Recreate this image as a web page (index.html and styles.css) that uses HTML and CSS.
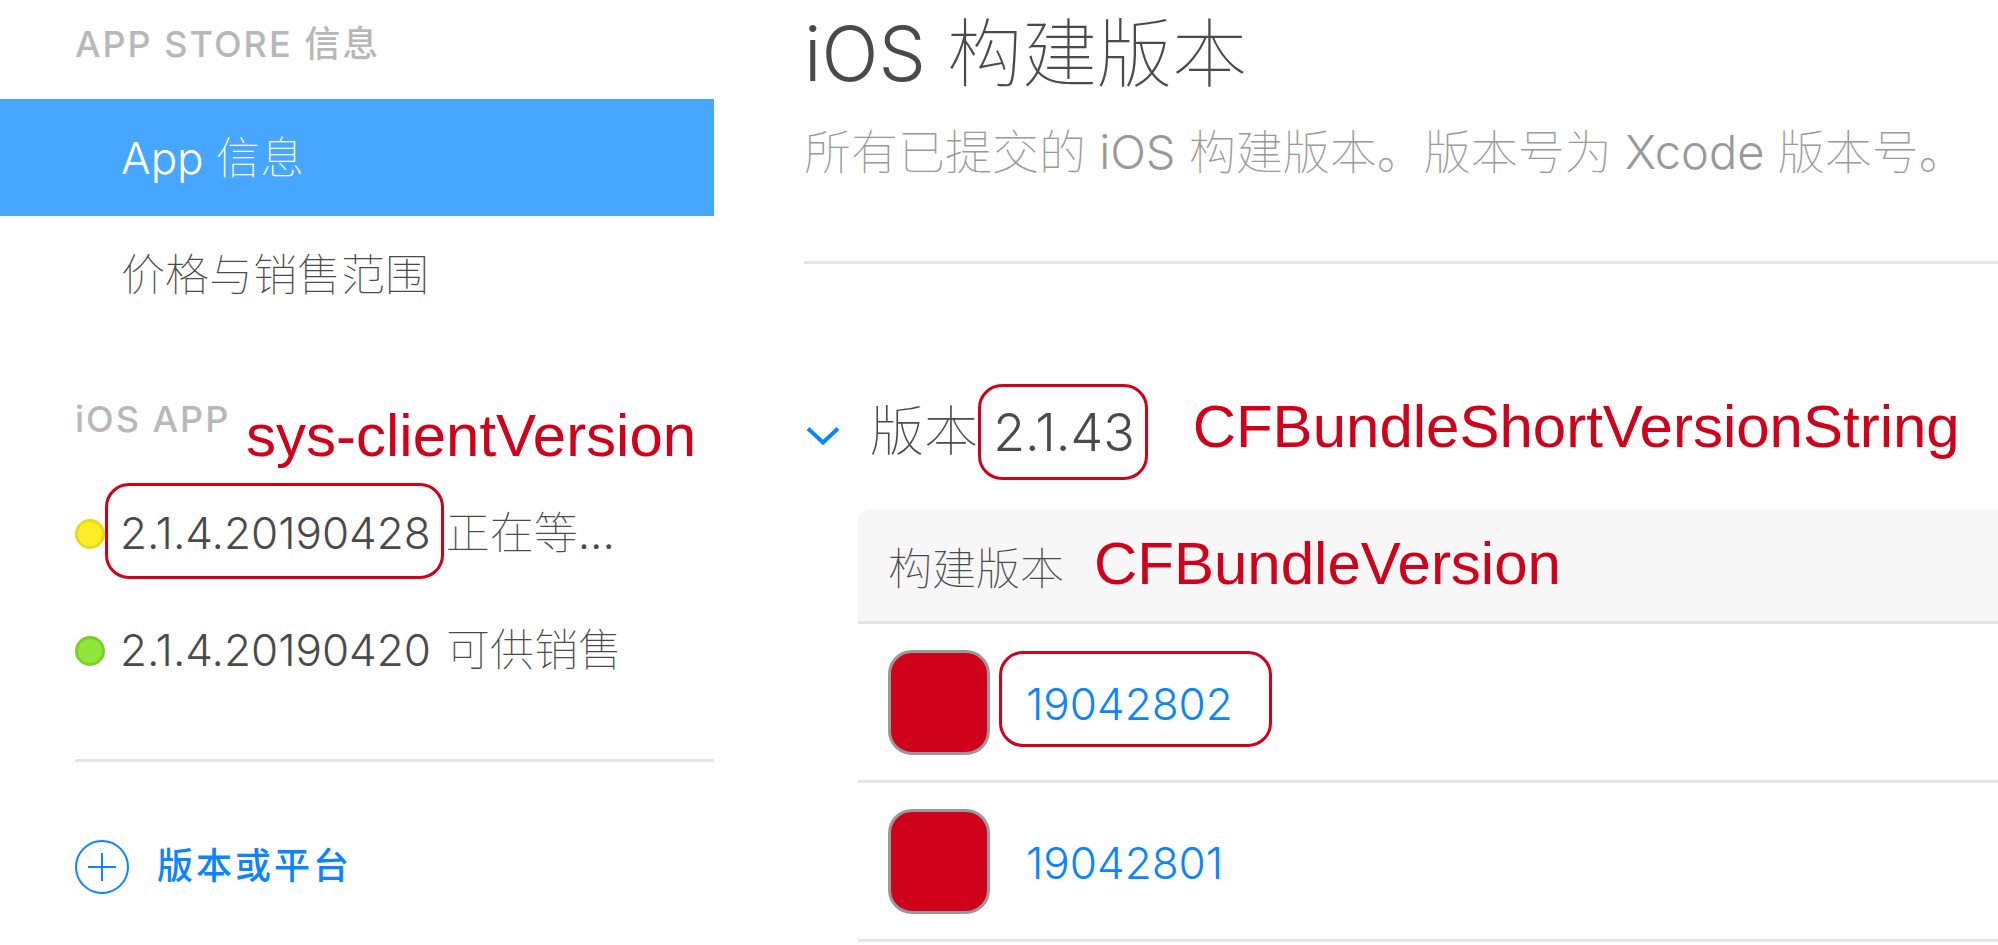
FILE: index.html
```html
<!DOCTYPE html>
<html lang="zh-CN">
<head>
<meta charset="utf-8">
<title>iOS 构建版本</title>
<link rel="stylesheet" href="styles.css">
</head>
<body>
<div class="page">
  <nav class="sidebar">
    <h2 class="group-title">APP STORE 信息</h2>
    <ul class="menu">
      <li><a class="menu-item active" href="#info">App <span class="han">信息</span></a></li>
      <li><a class="menu-item" href="#pricing"><span class="han">价格与销售范围</span></a></li>
    </ul>
    <h2 class="group-title platform">iOS APP<span class="note note-client">sys-clientVersion</span></h2>
    <ul class="menu">
      <li><a class="menu-item version" href="#v428"><span class="dot waiting"></span><span class="marked marked-version">2.1.4.20190428</span> <span><span class="han">正在等</span>...</span></a></li>
      <li><a class="menu-item version" href="#v420"><span class="dot ready"></span><span>2.1.4.20190420</span> <span class="han">可供销售</span></a></li>
    </ul>
    <div class="add-area">
      <button class="add" type="button">
        <svg class="add-icon" viewBox="0 0 54 54" aria-hidden="true"><circle cx="27" cy="27" r="26"/><path d="M27 13v28M13 27h28"/></svg>
        <span class="add-label">版本或平台</span>
      </button>
    </div>
  </nav>
  <main class="content">
    <header class="heading">
      <h1 class="title">iOS <span class="han">构建版本</span></h1>
      <p class="subtitle"><span class="han">所有已提交的</span> iOS <span class="han">构建版本。版本号为</span> Xcode <span class="han">版本号。</span></p>
    </header>
    <section class="release">
      <h2 class="release-title">
        <button class="toggle" type="button" aria-label="折叠"><svg class="chevron" viewBox="0 0 34 20" aria-hidden="true"><path d="M2 2.500l15 14 15-14"/></svg></button>
        <span><span class="han">版本</span> <span class="marked marked-release">2.1.43</span></span>
        <span class="note note-short">CFBundleShortVersionString</span>
      </h2>
      <table class="builds">
        <thead>
          <tr><th scope="col"><div class="column-head"><span class="han">构建版本</span><span class="note note-build">CFBundleVersion</span></div></th></tr>
        </thead>
        <tbody>
          <tr><td><div class="build"><span class="app-icon"></span><a class="build-link marked marked-build" href="#b19042802">19042802</a></div></td></tr>
          <tr><td><div class="build"><span class="app-icon"></span><a class="build-link" href="#b19042801">19042801</a></div></td></tr>
        </tbody>
      </table>
    </section>
  </main>
</div>
</body>
</html>
```
FILE: styles.css
```css
*, *::after { box-sizing: border-box; }

body {
  margin: 0;
  background: #fefefe;
  color: #4a4a4a;
  font-family: Inter, "Noto Sans CJK SC", sans-serif;
  font-size: 44px;
  font-weight: 300;
}

h1, h2, p, ul { margin: 0; padding: 0; font-weight: 300; }
ul { list-style: none; }
a { color: inherit; text-decoration: none; }

button {
  padding: 0;
  border: 0;
  background: none;
  font: inherit;
  cursor: pointer;
}

.han { font-weight: 100; }

.page { display: flex; gap: 90px; overflow: hidden; }

.sidebar { flex: 0 0 714px; }

.group-title {
  padding: 20px 0 31px 75px;
  color: #b8b8b8;
  font-size: 36px;
  font-weight: 500;
  line-height: 48px;
  letter-spacing: 2px;
}

.platform { position: relative; padding-top: 62px; }

.menu-item {
  display: block;
  padding: 2px 0 0 121px;
  line-height: 115px;
  white-space: nowrap;
}

.active { background: #47a7ff; color: #fff; }

.version {
  display: flex;
  align-items: center;
  gap: 15px;
  padding-left: 75px;
}

.dot {
  width: 30px;
  height: 30px;
  border: 3px solid;
  border-radius: 50%;
}
.waiting { background: #ffee26; border-color: #ecd81a; }
.ready { background: #90e63c; border-color: #7bd024; }

.marked { position: relative; }

.marked::after {
  content: "";
  position: absolute;
  top: 50%;
  left: -15px;
  right: -13px;
  height: 96px;
  margin-top: -51px;
  border: 3px solid #d0021b;
  border-radius: 24px;
}

.note {
  color: #d0021b;
  font-family: "Liberation Sans", Arial, sans-serif;
  font-size: 60px;
  font-weight: 400;
  line-height: 68px;
  letter-spacing: 0;
  white-space: nowrap;
}

.note-client { position: absolute; left: 246px; top: 69px; }

.add-area {
  margin: 51px 0 0 75px;
  padding: 78px 0 50px;
  border-top: 3px solid #e5e5e5;
}

.add {
  display: flex;
  align-items: center;
  gap: 28px;
  color: #0a84ff;
  font-size: 36px;
  font-weight: 500;
  line-height: 48px;
  letter-spacing: 3px;
}

.add-label { padding-bottom: 2px; }

.add-icon { width: 54px; height: 54px; }

.add-icon, .chevron { display: block; fill: none; stroke: #0a84ff; }
.add-icon { stroke-width: 2; }
.chevron { width: 34px; height: 20px; stroke-width: 4; }

.content { flex: 1; min-width: 0; }

.heading {
  padding: 6px 0 67px;
  border-bottom: 3px solid #e5e5e5;
  white-space: nowrap;
}

.title { font-size: 75px; line-height: 96px; }

.subtitle { margin-top: 8px; color: #999; font-size: 47px; line-height: 84px; }

.release { padding-top: 120px; }

.release-title {
  display: flex;
  align-items: center;
  font-size: 54px;
  line-height: 96px;
  white-space: nowrap;
}

.toggle { width: 66px; padding: 6px 0 0 2px; }

.marked-release { font-size: 52px; }
.marked-release::after { margin-top: -49px; }

.note-short { margin: 0 0 12px 58px; }

.builds {
  width: calc(100% - 54px);
  margin: 29px 0 0 54px;
  border-spacing: 0;
}

.builds th, .builds td {
  padding: 0 30px;
  border-bottom: 3px solid #e5e5e5;
  text-align: left;
}

.builds th {
  background: #f7f7f7;
  border-top-left-radius: 12px;
  font-weight: 300;
}

.column-head { display: flex; align-items: center; gap: 30px; height: 111px; }

.note-build { margin-bottom: 3px; }

.build { display: flex; align-items: center; gap: 36px; height: 156px; }

.app-icon {
  width: 102px;
  height: 105px;
  border: 3px solid #999;
  border-radius: 24px;
  background: #d0021b;
}

.build-link { padding-top: 4px; color: #0a84ff; }

.marked-build::after { left: -27px; right: -39px; }
```
